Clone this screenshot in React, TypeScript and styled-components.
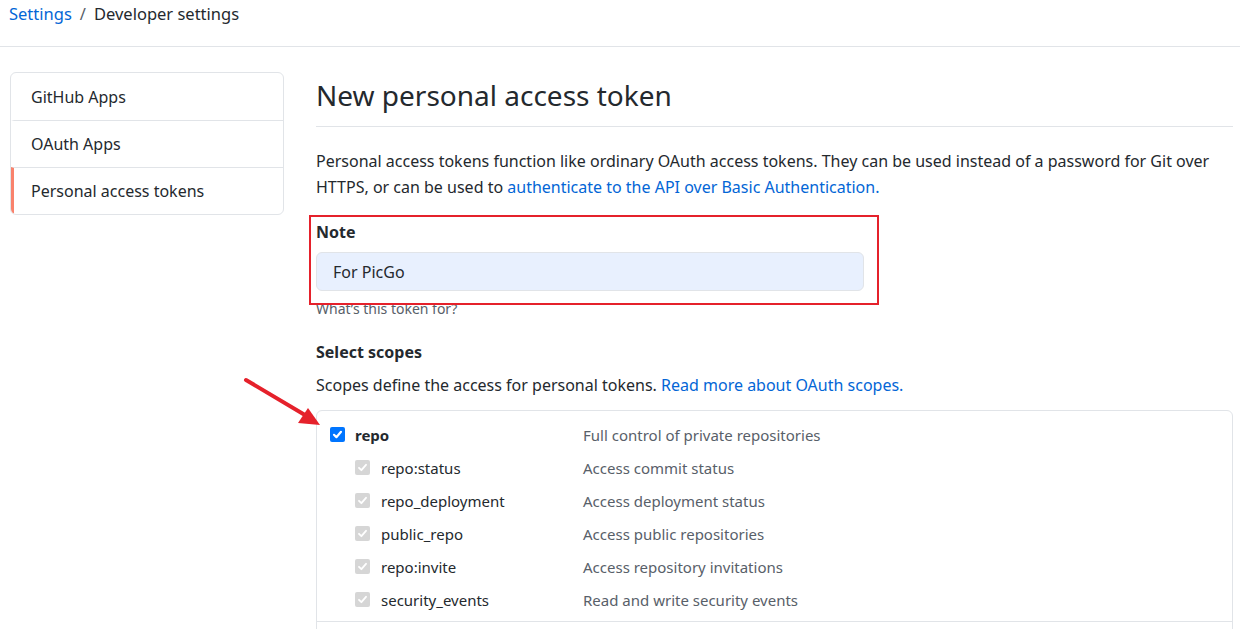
import React from "react";
import styled, { createGlobalStyle } from "styled-components";

const Global = createGlobalStyle`
  html, body { margin: 0; padding: 0; background: #fff; }
  body {
    font-family: "Noto Sans", "Open Sans", Arial, sans-serif;
    color: #24292e;
    overflow: hidden;
  }
  * { box-sizing: border-box; }
`;

const Page = styled.div`
  width: 1240px;
  height: 629px;
  overflow: hidden;
  position: relative;
`;

const Header = styled.div`
  height: 47px;
  border-bottom: 1px solid #e1e4e8;
  padding: 1px 0 0 9px;
  font-size: 16.5px;
  line-height: 26px;
  display: flex;
  gap: 8px;
`;

const Crumb = styled.a<{ $link?: boolean }>`
  color: ${(p) => (p.$link ? "#0366d6" : "#24292e")};
  text-decoration: none;
`;

const Sep = styled.span`
  color: #586069;
`;

const Body = styled.div`
  display: flex;
  padding: 25px 0 0 10px;
  gap: 32px;
`;

const Sidebar = styled.nav`
  width: 274px;
  flex: none;
  border: 1px solid #e1e4e8;
  border-radius: 6px;
  align-self: flex-start;
  overflow: hidden;
`;

const NavItem = styled.div<{ $active?: boolean; $first?: boolean }>`
  height: 47px;
  display: flex;
  align-items: center;
  font-size: 16px;
  border-top: ${(p) => (p.$first ? "none" : "1px solid #e1e4e8")};
  border-left: 3px solid ${(p) => (p.$active ? "#f9826c" : "transparent")};
  padding-left: 17px;
`;

const Main = styled.main`
  width: 917px;
  flex: none;
  position: relative;
`;

const Title = styled.h1`
  margin: 0;
  font-size: 28px;
  font-weight: 400;
  line-height: 46px;
  padding-bottom: 8px;
  border-bottom: 1px solid #e1e4e8;
`;

const Lead = styled.p`
  margin: 21px 0 0;
  font-size: 16px;
  line-height: 26px;
`;

const Link = styled.a`
  color: #0366d6;
  text-decoration: none;
`;

const Group = styled.div`
  position: relative;
  margin-top: 20px;
`;

const Label = styled.div`
  font-size: 16px;
  font-weight: 700;
  line-height: 24px;
`;

const Input = styled.div`
  margin-top: 8px;
  width: 548px;
  height: 39px;
  border: 1px solid #e1e4e8;
  border-radius: 6px;
  background: #e8f0fe;
  display: flex;
  align-items: center;
  padding-left: 16px;
  font-size: 16px;
`;

const Hint = styled.div`
  font-size: 14px;
  color: #586069;
  line-height: 18px;
  margin-top: 9px;
`;

const Highlight = styled.div`
  position: absolute;
  left: -7px;
  top: -5px;
  width: 570px;
  height: 90px;
  border: 2px solid #e5212b;
  pointer-events: none;
`;

const SectionTitle = styled.h3`
  margin: 22px 0 0;
  font-size: 16px;
  font-weight: 700;
  line-height: 24px;
`;

const SectionText = styled.p`
  margin: 9px 0 0;
  font-size: 16px;
  line-height: 24px;
`;

const ScopeBox = styled.div`
  margin-top: 13px;
  border: 1px solid #e1e4e8;
  border-radius: 6px;
  padding-top: 7px;
`;

const ScopeGroup = styled.div`
  border-bottom: 1px solid #e1e4e8;
  padding-bottom: 5px;
`;

const Row = styled.div<{ $child?: boolean }>`
  height: 33px;
  display: grid;
  grid-template-columns: ${(p) => (p.$child ? "228px 1fr" : "253px 1fr")};
  align-items: center;
  padding-left: ${(p) => (p.$child ? 38 : 13)}px;
  font-size: 15px;
`;

const ScopeName = styled.label<{ $bold?: boolean; $child?: boolean }>`
  display: flex;
  align-items: center;
  gap: ${(p) => (p.$child ? 11 : 10)}px;
  font-weight: ${(p) => (p.$bold ? 700 : 400)};
`;

const Desc = styled.span`
  color: #586069;
`;

const Box = styled.span<{ $disabled?: boolean }>`
  width: 15px;
  height: 15px;
  border-radius: 2px;
  background: ${(p) => (p.$disabled ? "#d6d6d6" : "#0075ff")};
  display: inline-flex;
  align-items: center;
  justify-content: center;
  flex: none;
`;

const Arrow = styled.svg`
  position: absolute;
  left: 240px;
  top: 372px;
`;

function Check({ disabled }: { disabled?: boolean }) {
  return (
    <Box $disabled={disabled}>
      <svg width="11" height="11" viewBox="0 0 11 11">
        <path
          d="M2 5.8 L4.4 8.2 L9 2.8"
          fill="none"
          stroke="#fff"
          strokeWidth={disabled ? 1.8 : 2.2}
          strokeLinecap="round"
          strokeLinejoin="round"
        />
      </svg>
    </Box>
  );
}

const children = [
  ["repo:status", "Access commit status"],
  ["repo_deployment", "Access deployment status"],
  ["public_repo", "Access public repositories"],
  ["repo:invite", "Access repository invitations"],
  ["security_events", "Read and write security events"],
];

export default function App() {
  return (
    <Page>
      <Global />
      <Header>
        <Crumb $link href="#">Settings</Crumb>
        <Sep>/</Sep>
        <Crumb>Developer settings</Crumb>
      </Header>
      <Body>
        <Sidebar>
          <NavItem $first>GitHub Apps</NavItem>
          <NavItem>OAuth Apps</NavItem>
          <NavItem $active>Personal access tokens</NavItem>
        </Sidebar>
        <Main>
          <Title>New personal access token</Title>
          <Lead>
            Personal access tokens function like ordinary OAuth access tokens. They can be used instead of a password for Git over HTTPS, or can be used to{" "}
            <Link href="#">authenticate to the API over Basic Authentication.</Link>
          </Lead>
          <Group>
            <Label>Note</Label>
            <Input>For PicGo</Input>
            <Hint>What’s this token for?</Hint>
            <Highlight />
          </Group>
          <SectionTitle>Select scopes</SectionTitle>
          <SectionText>
            Scopes define the access for personal tokens.{" "}
            <Link href="#">Read more about OAuth scopes.</Link>
          </SectionText>
          <ScopeBox>
            <ScopeGroup>
              <Row>
                <ScopeName $bold>
                  <Check />
                  repo
                </ScopeName>
                <Desc>Full control of private repositories</Desc>
              </Row>
              {children.map(([n, d]) => (
                <Row $child key={n}>
                  <ScopeName $child>
                    <Check disabled />
                    {n}
                  </ScopeName>
                  <Desc>{d}</Desc>
                </Row>
              ))}
            </ScopeGroup>
            <Row />
          </ScopeBox>
        </Main>
      </Body>
      <Arrow width="90" height="60" viewBox="0 0 90 60">
        <path d="M6 8 L70 46" stroke="#e5212b" strokeWidth="4" strokeLinecap="round" />
        <path d="M80 53 L58 51 L68 36 Z" fill="#e5212b" />
      </Arrow>
    </Page>
  );
}
